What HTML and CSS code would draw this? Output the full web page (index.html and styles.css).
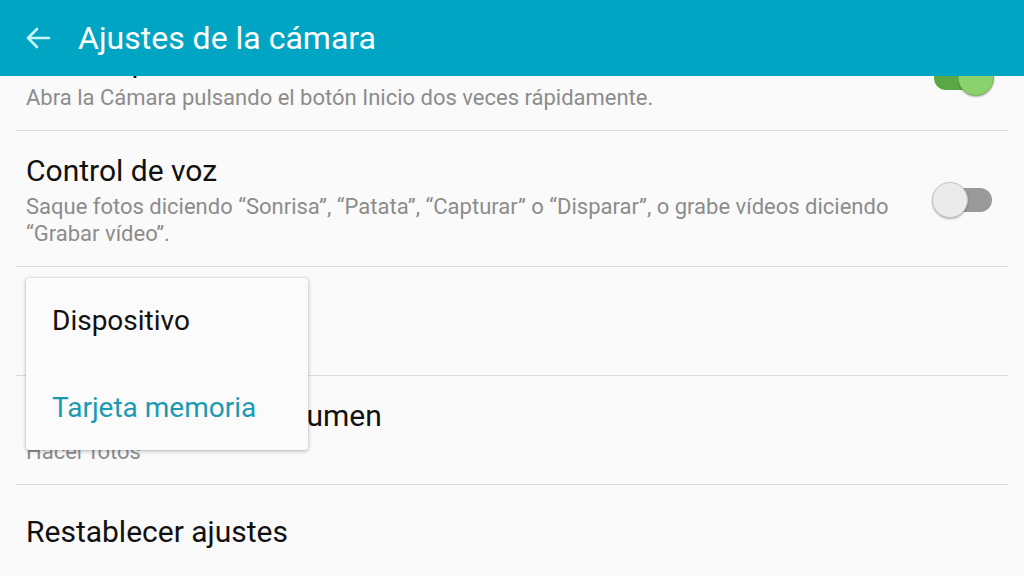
FILE: index.html
```html
<!DOCTYPE html>
<html lang="es">
<head>
<meta charset="utf-8">
<title>Ajustes de la cámara</title>
<link rel="stylesheet" href="styles.css">
</head>
<body>
<div class="screen">
  <header class="appbar">
    <svg class="back" width="28" height="28" viewBox="0 0 28 28"><path d="M25 14H4M13 5L4 14l9 9" fill="none" stroke="#c8f6ff" stroke-width="2.6" stroke-linecap="round" stroke-linejoin="round"/></svg>
    <h1 class="title">Ajustes de la cámara</h1>
  </header>
  <main class="list">
    <div class="item first">
      <div class="text">
        <div class="name">Inicio rápido</div>
        <div class="sub">Abra la Cámara pulsando el botón Inicio dos veces rápidamente.</div>
      </div>
      <div class="switch on"><span class="track"></span><span class="thumb"></span></div>
    </div>
    <div class="item">
      <div class="text">
        <div class="name">Control de voz</div>
        <div class="sub">Saque fotos diciendo “Sonrisa”, “Patata”, “Capturar” o “Disparar”, o grabe vídeos diciendo “Grabar vídeo”.</div>
      </div>
      <div class="switch"><span class="track"></span><span class="thumb"></span></div>
    </div>
    <div class="item">
      <div class="text">
        <div class="name">Almacenamiento</div>
        <div class="sub">Tarjeta memoria</div>
      </div>
    </div>
    <div class="item">
      <div class="text">
        <div class="name">Función teclas de volumen</div>
        <div class="sub">Hacer fotos</div>
      </div>
    </div>
    <div class="item last">
      <div class="text">
        <div class="name">Restablecer ajustes</div>
      </div>
    </div>
    <div class="menu">
      <div class="opt">Dispositivo</div>
      <div class="opt sel">Tarjeta memoria</div>
    </div>
  </main>
</div>
</body>
</html>
```

FILE: styles.css
```css
* { box-sizing: border-box; }
html, body { margin: 0; padding: 0; }
body {
  width: 1024px;
  height: 576px;
  overflow: hidden;
  background: #fafafa;
  font-family: Roboto, "Noto Sans", sans-serif;
}
.screen { width: 1024px; height: 576px; overflow: hidden; }
.appbar {
  position: relative;
  z-index: 2;
  height: 76px;
  background: #00a5c3;
  display: flex;
  align-items: center;
  padding-left: 24px;
}
.back { flex: none; }
.title {
  margin: 0 0 0 26px;
  font-size: 32px;
  font-weight: 400;
  color: #ffffff;
  letter-spacing: 0;
}
.list {
  position: relative;
  margin-top: -54px;
}
.item {
  margin: 0 16px;
  display: flex;
  align-items: center;
  padding: 22px 0 19px 10px;
  border-bottom: 1px solid #dcdcdc;
}
.item.last { border-bottom: none; padding-top: 29px; }
.text { flex: 1; min-width: 0; padding-right: 40px; }
.name {
  font-size: 30px;
  line-height: 36px;
  color: #111111;
}
.sub {
  margin-top: 4px;
  font-size: 22px;
  line-height: 27px;
  color: #8c8c8c;
}
.switch {
  position: relative;
  flex: none;
  width: 62px;
  height: 36px;
  margin-right: 14px;
}
.switch .track {
  position: absolute;
  left: 12px;
  top: 6px;
  width: 48px;
  height: 24px;
  border-radius: 12px;
  background: #9a9a9a;
}
.switch .thumb {
  position: absolute;
  left: 0;
  top: 0;
  width: 36px;
  height: 36px;
  border-radius: 50%;
  background: #ebebeb;
  border: 1px solid #c4c4c4;
  box-shadow: 0 1px 2px rgba(0,0,0,0.3);
}
.switch.on .track { background: #5aa845; left: 2px; }
.switch.on .thumb { left: 26px; background: #8bd16c; border-color: #78b95c; }
.menu {
  position: absolute;
  left: 26px;
  top: 256px;
  width: 282px;
  background: #fbfbfb;
  border-radius: 3px;
  box-shadow: 0 1px 4px rgba(0,0,0,0.28), 0 0 1px rgba(0,0,0,0.2);
  z-index: 3;
  padding: 1px 0;
}
.opt {
  height: 85px;
  display: flex;
  align-items: center;
  padding-left: 26px;
  font-size: 28px;
  color: #111111;
}
.opt:first-child { padding-bottom: 2px; }
.opt.sel { color: #1a9ab1; padding-top: 2px; }
```
